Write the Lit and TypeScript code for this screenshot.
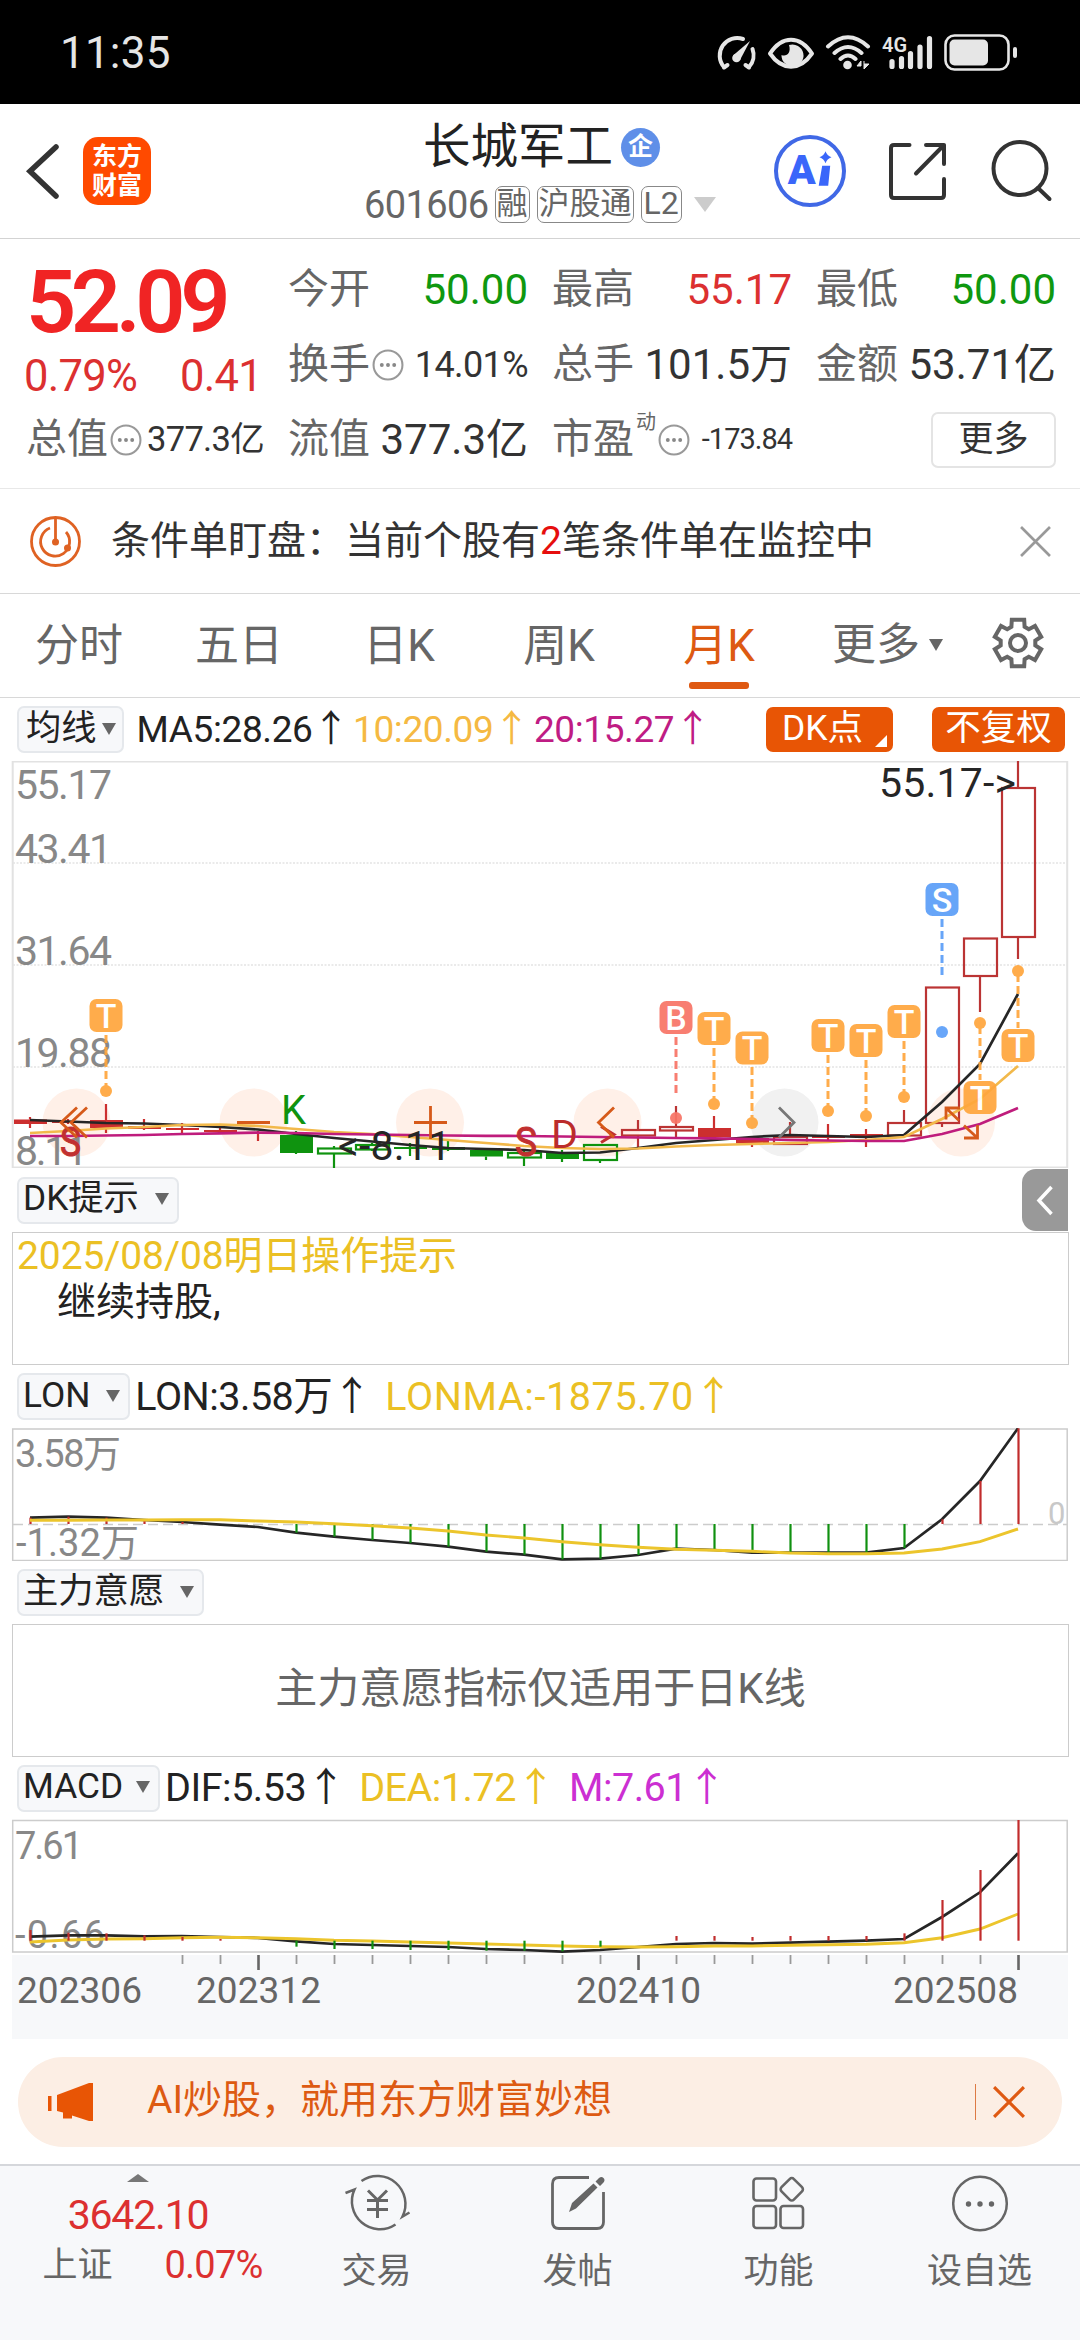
import { LitElement, html, svg, css } from "lit";
import { customElement } from "lit/decorators.js";

const STEP = 38;
const X0 = 30;
const cx = (i: number) => X0 + i * STEP;
const line = (ys: number[]) => ys.map((y, i) => `${cx(i)},${y.toFixed(1)}`).join(" ");

/* [top wick, body top, body bottom, bottom wick, kind] */
type Candle = [number, number, number, number, "rf" | "rh" | "gf" | "gh"];
const CANDLES: Candle[] = [
  [1117, 1119.5, 1124, 1128, "rf"],
  [1119, 1121, 1123, 1124, "rf"],
  [1104, 1120, 1128, 1133, "rf"],
  [1119, 1126, 1129, 1130, "rf"],
  [1123, 1128, 1130, 1133, "rf"],
  [1126, 1130, 1132, 1134, "rf"],
  [1131, 1132, 1134, 1141, "rf"],
  [1131, 1135, 1153, 1154, "gf"],
  [1146, 1148.5, 1153.5, 1169, "gh"],
  [1143, 1145, 1149.5, 1151, "gh"],
  [1143, 1147, 1149, 1156, "gf"],
  [1141, 1147, 1150, 1151, "gf"],
  [1149, 1150, 1156.5, 1160, "gf"],
  [1151, 1153, 1157.5, 1166, "gh"],
  [1150, 1153, 1159, 1162, "gf"],
  [1144, 1145, 1160, 1163, "gh"],
  [1120, 1130, 1135.5, 1147, "rh"],
  [1106, 1127, 1130.5, 1137, "rh"],
  [1116, 1128, 1137, 1138, "rf"],
  [1137, 1138, 1143.5, 1147, "rf"],
  [1122, 1137, 1144, 1144, "rh"],
  [1124, 1136, 1138, 1142, "rf"],
  [1129, 1134, 1136.5, 1147, "rf"],
  [1110, 1123, 1135.5, 1137, "rh"],
  [987, 987.5, 1123, 1127, "rh"],
  [938, 938.5, 976, 1012, "rh"],
  [761, 788, 937, 959, "rh"],
];
const MA5 = [1120, 1121.5, 1123, 1123.5, 1125, 1127, 1129.5, 1134, 1138, 1141.5, 1145, 1148, 1149, 1150, 1153, 1152.5, 1148, 1143, 1140, 1137, 1135, 1136, 1137, 1135, 1102, 1064, 994];
const MA10 = [1133, 1131, 1128.5, 1127, 1125, 1124.5, 1126, 1129, 1132, 1134, 1137, 1140, 1143, 1146, 1148, 1149, 1148.5, 1146.5, 1145, 1144, 1143, 1142, 1140, 1137, 1119, 1099, 1066];
const MA20 = [1136, 1136, 1135.5, 1135, 1134, 1133.3, 1132.6, 1133, 1134, 1134.5, 1135, 1135.5, 1135.8, 1136, 1136.5, 1137, 1137.5, 1138, 1138.3, 1139, 1140, 1140.5, 1141, 1141, 1134, 1124, 1108];

const LON = [1073, 1070, 1073, 1080, 1086, 1094, 1101, 1118, 1130, 1140, 1149, 1160, 1175, 1184, 1198, 1196, 1185, 1166, 1170, 1178, 1178, 1178, 1178, 1164, 1078, 963, 805].map((v) => 1160 + v / 3);
const LONMA = [1081, 1081, 1080, 1080, 1079, 1079, 1083, 1086, 1091, 1097, 1104, 1113, 1125, 1134, 1145, 1154, 1162, 1168, 1171, 1174, 1179, 1181, 1181, 1179, 1167, 1145, 1107].map((v) => 1160 + v / 3);
const DIF = [1130, 1126, 1126, 1129, 1128, 1131, 1134, 1144, 1152, 1155, 1158, 1161, 1167, 1170, 1175, 1170, 1161, 1152, 1149, 1151, 1148, 1145, 1142, 1137, 1071, 997, 880].map((v) => 1560 + v / 3);
const DEA = [1146, 1140, 1137, 1136, 1133, 1132, 1133, 1136, 1141, 1143, 1146, 1149, 1152, 1155, 1158, 1160, 1161, 1160, 1158, 1158, 1156, 1154, 1153, 1148, 1133, 1107, 1062].map((v) => 1560 + v / 3);
const MBAR = [1110, 1118, 1120, 1126, 1131, 1137, 1142, 1160, 1167, 1167, 1170, 1170, 1172, 1172, 1174, 1160, 1142, 1128, 1128, 1131, 1128, 1128, 1128, 1120, 1020, 930, 780].map((v) => 1560 + v / 3);

/* index, letter, top of the badge, dot centre, dash start, dash end */
const MARKS: [number, string, number, number, number, number][] = [
  [2, "T", 999, 1091, 1035, 1088],
  [17, "B", 1001, 1118, 1037, 1093],
  [18, "T", 1012, 1104, 1048, 1101],
  [19, "T", 1031.5, 1123, 1067, 1120],
  [21, "T", 1019, 1111, 1055, 1108],
  [22, "T", 1024, 1116, 1060, 1113],
  [23, "T", 1005, 1097, 1041, 1094],
  [24, "S", 883, 1032, 919, 976],
  [25, "T", 1081, 1023, 1026, 1080],
  [26, "T", 1029, 971, 974, 1028],
];
const MARK_COLOR: Record<string, string> = { T: "#ffa63c", B: "#f87466", S: "#5b9ef8" };

@customElement("app-root")
export class AppRoot extends LitElement {
  static styles = css`
    :host {
      display: block;
      width: 1080px;
      height: 2340px;
      overflow: hidden;
      background: #fff;
      color: #222;
      font-family: Roboto, "Noto Sans CJK SC", sans-serif;
      font-size: 36px;
      line-height: 1;
    }
    * { box-sizing: border-box; }
    svg { display: block; flex: none; }
    svg text { font-family: Roboto, "Noto Sans CJK SC", sans-serif; }

    .status { height: 104px; background: #000; color: #e6e6e6; display: flex; align-items: center; justify-content: space-between; padding: 2px 62px 0 60px; }
    .clock { font-size: 44px; letter-spacing: 0.2px; }
    .g4 { font-size: 20px; font-weight: 600; fill: #e6e6e6; }

    .header { height: 135px; border-bottom: 1.5px solid #d3d3d3; display: flex; align-items: center; padding: 0 28px 0 24px; }
    .logo { width: 68px; height: 68px; border-radius: 15px; background: #ff4a00; color: #fff; font-size: 25px; line-height: 29px; font-weight: 700; margin-left: 23px; padding: 5px 0 0; text-align: center; flex: none; }
    .titles { width: 351px; margin-left: 213px; height: 134px; padding-top: 18px; flex: none; }
    .name { display: flex; align-items: center; gap: 8px; padding-left: 59px; height: 52px; font-size: 47.5px; }
    .seal { width: 39px; height: 39px; border-radius: 50%; background: #5f8fe8; color: #fff; font-size: 25px; font-weight: 700; line-height: 37px; text-align: center; margin-top: -2px; }
    .code { display: flex; align-items: center; gap: 7px; height: 37px; margin-top: 12px; color: #666; font-size: 38px; white-space: nowrap; }
    .code > * { flex: none; }
    .num { letter-spacing: -0.6px; margin-right: -1px; }
    .tag { border: 1.5px solid #888; border-radius: 7px; height: 37px; line-height: 33px; font-size: 31px; padding: 0 1px; }
    .tag2 { font-size: 32px; padding: 0 2px; }
    .tri { width: 0; height: 0; border: 7.5px solid transparent; border-top: 12px solid #666; border-bottom: 0; }
    .tri-lg { border: 11px solid transparent; border-top: 15px solid #ccc; border-bottom: 0; margin-left: 5px; }
    .acts { display: flex; align-items: center; margin-left: 58px; }
    .share { margin-left: 41px; }
    .search { margin-left: 43px; }
    .ai { font-size: 41px; font-weight: 900; fill: #3a66fa; }

    .quote { height: 250px; border-bottom: 1.5px solid #e8e8e8; display: grid; grid-template-columns: 238px 240px 240px 240px; column-gap: 24px; padding: 13px 0 0 26px; color: #333; font-size: 41px; }
    .qcol { display: flex; flex-direction: column; }
    .cell { height: 75px; display: flex; align-items: center; justify-content: space-between; white-space: nowrap; }
    .lab { display: flex; align-items: center; gap: 2px; color: #666; }
    .price { font-size: 88px; font-weight: 600; letter-spacing: -5.4px; color: #f02424; height: 100px; line-height: 100px; }
    .chg { height: 50px; display: flex; align-items: center; justify-content: space-between; color: #dc3030; font-size: 43.5px; letter-spacing: -0.7px; padding: 0 2px 0 0; margin-left: -2px; }
    .val { font-size: 42px; }
    .up { color: #dc3030; }
    .down { color: #0f980f; }
    .mid { font-size: 36px; letter-spacing: -0.6px; }
    .mid2 { font-size: 34.5px; letter-spacing: -0.7px; }
    .sml { font-size: 29px; letter-spacing: -1px; }
    .more { width: 125px; height: 56px; border: 2px solid #e4e4e4; border-radius: 7px; font-size: 35px; line-height: 51px; text-align: center; margin-left: 115px; }
    .dyn { font-size: 20px; align-self: flex-start; margin: -7px 0 0 0; }

    .notice { height: 105px; border-bottom: 1.5px solid #d8d8d8; display: flex; align-items: center; padding: 0 29px 0 29px; color: #333; }
    .ntext { flex: 1; margin-left: 29px; font-size: 39px; white-space: nowrap; }
    .hot { color: #e60e0e; }

    .tabs { height: 104px; border-bottom: 1.5px solid #d8d8d8; display: flex; color: #666; font-size: 44px; }
    .tab { width: 160px; flex: none; height: 103px; display: flex; flex-direction: column; align-items: center; padding-top: 30px; padding-right: 2px; }
    .on { color: #dd5a12; }
    .on::after { content: ""; width: 60px; height: 7px; border-radius: 3px; background: #df5912; margin-top: 14px; }
    .tmore { width: 192px; flex: none; display: flex; align-items: center; gap: 9px; padding-left: 32px; padding-bottom: 2px; }
    .tset { display: flex; align-items: center; padding-bottom: 6px; }

    .bar { height: 63px; display: flex; align-items: center; padding-left: 17px; white-space: nowrap; }
    .bar-dk { height: 64px; }
    .bar-macd { height: 62px; }
    .chip { height: 47px; border: 2px solid #e5e8ec; border-radius: 7px; background: #f7f8fa; display: flex; align-items: center; gap: 16px; padding: 0 8px 2px 4px; font-size: 35.3px; }
    .chip-ma { gap: 5px; padding-left: 7px; padding-right: 6px; }
    .chip-macd { gap: 13px; }
    .leg { display: flex; color: #222; margin-left: 5px; font-size: 39.5px; letter-spacing: -0.5px; }
    .leg span { margin-right: 14px; }
    .wide { letter-spacing: 0.6px; }
    .leg-ma { font-size: 37px; margin-left: 13px; letter-spacing: -0.4px; }
    .leg-ma span { margin-right: 4px; }
    .c10 { color: #f5b942; }
    .c20 { color: #bf1c84; }
    .cy { color: #ebc024; }
    .cm { color: #cc2fd2; }
    .pill { height: 45px; border-radius: 7px; background: #e85505; color: #fff; font-size: 35.5px; line-height: 43px; text-align: center; }
    .pills { margin-left: auto; margin-right: 15px; display: flex; gap: 39px; }
    .p1 { width: 127px; padding-right: 14px; position: relative; }
    .p1::after { content: ""; position: absolute; right: 6px; bottom: 5px; border-left: 12px solid transparent; border-bottom: 12px solid #fff; }
    .p2 { width: 133px; }

    .axis { fill: #888; }
    .drawer { margin-left: auto; margin-right: 12px; width: 46px; height: 62px; background: #999; border-radius: 14px 0 0 14px; }
    .panel { height: 133px; margin: 0 11px 0 12px; border: 1.5px solid #ccc; font-size: 39px; line-height: 46px; padding: 0 0 0 4px; white-space: pre; }
    .l1 { color: #ebc024; letter-spacing: -0.1px; }
    .l2 { padding-left: 40px; }
    .panel-c { display: flex; align-items: center; justify-content: center; color: #666; font-size: 42px; padding: 0 0 4px; }

    .banner { margin: 18px 18px 17px; height: 90px; border-radius: 45px; background: #fceee4; color: #dd5a12; display: flex; align-items: center; padding: 0 37px 0 28px; font-size: 39px; }
    .btext { margin-left: 53px; flex: 1; padding-bottom: 3px; }
    .sep { width: 1.5px; height: 36px; background: #dd7a45; margin-right: 17px; }

    .nav { height: 176px; border-top: 2px solid #d5d7db; background: #f7f8fa; display: flex; color: #666; }
    .index { width: 276px; display: flex; flex-direction: column; align-items: center; flex: none; }
    .uptri { border: 11px solid transparent; border-bottom: 8px solid #777; border-top: 0; margin-top: 8px; }
    .ival { font-size: 41px; letter-spacing: -1.2px; color: #dc3030; margin-top: 12px; height: 42px; line-height: 42px; }
    .irow { display: flex; align-items: center; gap: 52px; font-size: 35px; margin-top: 8px; height: 42px; padding-left: 29px; }
    .ipct { font-size: 38px; letter-spacing: -0.8px; color: #dc3030; }
    .item { width: 201.5px; display: flex; flex-direction: column; align-items: center; padding-top: 5px; font-size: 35px; gap: 17px; }
  `;

  private dots() {
    return html`<svg width="32" height="32" viewBox="-0.500 -0.500 31 31"><circle cx="15" cy="15" r="14" fill="none" stroke="#999" stroke-width="2"/><g fill="#888"><circle cx="9" cy="15" r="1.9"/><circle cx="15" cy="15" r="1.9"/><circle cx="21" cy="15" r="1.9"/></g></svg>`;
  }

  private cross(size: number, color: string, w: number) {
    return html`<svg width=${size} height=${size} viewBox="0 0 30 30" fill="none" stroke=${color} stroke-width=${w}><path d="M1 1 29 29M29 1 1 29"/></svg>`;
  }

  private status() {
    return html`<div class="status">
      <span class="clock">11:35</span>
      <svg width="302" height="40" viewBox="714 32 302 40" fill="none" stroke="#e6e6e6">
        <path d="M722 66A17.500 17.500 0 0 1 741 38M750.500 48A17.500 17.500 0 0 1 747 66" stroke-width="4" stroke-linecap="round"/>
        <path d="M748 40 738 59 731 54.500Z" fill="#e6e6e6" stroke="none"/>
        <path d="M722 66.500l3.500-2.500M747 66.500l-3.500-2.500" stroke-width="4" stroke-linecap="round"/>
        <circle cx="734.500" cy="57" r="4.300" fill="#e6e6e6" stroke="none"/>
        <path d="M768 52.500C780 34 798 34 810 52.500C798 70 780 70 768 52.500Z" stroke-width="4" stroke-linejoin="round"/>
        <path d="M787 44a11 11 0 1 1-7.500 10c5 2 10-2 7.500-10Z" fill="#e6e6e6" stroke="none"/>
        <g stroke-width="4" stroke-linecap="round">
          <path d="M826 45.500Q846 27 866 45.500M832.500 52Q846 40 859.500 52M838.500 58Q846 51 853.500 58"/>
        </g>
        <circle cx="845.500" cy="64" r="4.300" fill="#e6e6e6" stroke="none"/>
        <path d="M855 65h4v-5l-4 5ZM862 63h5l-5 5v-8" fill="#e6e6e6" stroke-width="1"/>
        <text class="g4" x="880" y="51" stroke="none" textLength="25" lengthAdjust="spacingAndGlyphs">4G</text>
        <g stroke-width="5.200" stroke-linecap="round"><path d="M890 60.500v5M899.500 57.500v8M908.500 52.500v13M918 46v19.500M927.500 37.500v28"/></g>
        <rect x="943.500" y="34.500" width="63" height="34" rx="9" stroke-width="2.600"/>
        <rect x="947.500" y="38.500" width="38.500" height="26" rx="5" fill="#e6e6e6" stroke="none"/>
        <rect x="1011" y="46" width="4" height="11" rx="2" fill="#e6e6e6" stroke="none"/>
      </svg>
    </div>`;
  }

  private header() {
    return html`<div class="header">
      <svg width="36" height="60" viewBox="24 141 36 60" fill="none" stroke="#333" stroke-width="5.500" stroke-linecap="round"><path d="M56 147 30 171.300 56 196"/></svg>
      <div class="logo">东方<br>财富</div>
      <div class="titles">
        <div class="name"><span>长城军工</span><span class="seal">企</span></div>
        <div class="code"><span class="num">601606</span><span class="tag">融</span><span class="tag">沪股通</span><span class="tag tag2">L2</span><span class="tri tri-lg"></span></div>
      </div>
      <div class="acts">
        <svg width="74" height="74" viewBox="771.300 134.300 74 74"><circle cx="808.300" cy="171.300" r="34" fill="none" stroke="#4068e6" stroke-width="4"/>
          <text class="ai" x="786" y="184" textLength="29">A</text>
          <path d="M820.500 166h8l-2 20h-9.500zM823.800 151.500q1.500 4.500 6 6q-4.500 1.500-6 6q-1.500-4.500-6-6q4.500-1.500 6-6z" fill="#3a66fa"/></svg>
        <svg class="share" width="60" height="60" viewBox="887 141 60 60" fill="none" stroke="#333" stroke-width="4" stroke-linecap="round" stroke-linejoin="round"><path d="M908.500 145H893q-3 0-3 3v47q0 3 3 3h47q3 0 3-3V179M925 145h18v19M943 145 915 173.500"/></svg>
        <svg class="search" width="62" height="64" viewBox="990 139 62 64" fill="none" stroke="#333" stroke-width="4" stroke-linecap="round"><circle cx="1019" cy="168.500" r="26.500"/><path d="M1037 188 1048.500 199"/></svg>
      </div>
    </div>`;
  }

  private quote() {
    return html`<div class="quote">
      <div class="qcol">
        <div class="price">52.09</div>
        <div class="chg"><span>0.79%</span><span>0.41</span></div>
        <div class="cell"><span class="lab">总值${this.dots()}</span><span class="val mid2">377.3亿</span></div>
      </div>
      <div class="qcol">
        <div class="cell"><span class="lab">今开</span><span class="val down">50.00</span></div>
        <div class="cell"><span class="lab">换手${this.dots()}</span><span class="val mid">14.01%</span></div>
        <div class="cell"><span class="lab">流值</span><span class="val">377.3亿</span></div>
      </div>
      <div class="qcol">
        <div class="cell"><span class="lab">最高</span><span class="val up">55.17</span></div>
        <div class="cell"><span class="lab">总手</span><span class="val">101.5万</span></div>
        <div class="cell"><span class="lab">市盈<span class="dyn">动</span>${this.dots()}</span><span class="val sml">-173.84</span></div>
      </div>
      <div class="qcol">
        <div class="cell"><span class="lab">最低</span><span class="val down">50.00</span></div>
        <div class="cell"><span class="lab">金额</span><span class="val">53.71亿</span></div>
        <div class="cell"><span class="more">更多</span></div>
      </div>
    </div>`;
  }

  private gear() {
    const pts: string[] = [];
    for (let k = 0; k < 6; k++) {
      const a = k * 60;
      for (const [da, r] of [[-22, 17.5], [-15, 24], [15, 24], [22, 17.5]] as const) {
        const t = ((a + da - 90) * Math.PI) / 180;
        pts.push(`${(26 + r * Math.cos(t)).toFixed(1)},${(26 + r * Math.sin(t)).toFixed(1)}`);
      }
    }
    return html`<svg width="52" height="52" viewBox="0 0 52 52" fill="none" stroke="#666" stroke-width="4"><polygon points=${pts.join(" ")}/><circle cx="26" cy="26" r="8"/></svg>`;
  }

  private mainChart() {
    const red = "#bb3434";
    return html`<svg width="1080" height="407" viewBox="0 761 1080 407" fill="none">
      <rect x="12.700" y="761.500" width="1054.500" height="406" stroke="#e2e2e2" stroke-width="2"/>
      <path d="M13 863H1067M13 965H1067M13 1067H1067" stroke="#e4e4e4" stroke-width="1.500" stroke-dasharray="2 1.500"/>
      ${[76.5, 253.5, 430, 607.5, 961].map((x) => svg`<circle cx=${x} cy="1122.500" r="34" fill="#fff0e8"/>`)}
      <circle cx="784.500" cy="1122.500" r="34" fill="#f1f1f1"/>
      <g class="axis" font-size="41">
        <text x="15" y="799" textLength="97">55.17</text><text x="15" y="863" textLength="97">43.41</text>
        <text x="15" y="965" textLength="97">31.64</text><text x="15" y="1067" textLength="97">19.88</text>
        <text x="15" y="1165" textLength="73">8.11</text>
      </g>
      ${CANDLES.map(([h, t, b, l, k], i) => {
        const c = k[0] === "g" ? "#0f930f" : k === "rf" ? "#cc2f2f" : red;
        const x = cx(i);
        return svg`<path d="M${x} ${h}V${t}M${x} ${b}V${l}" stroke=${c} stroke-width="2.200"/>
          <rect x=${x - 16} y=${t} width="33" height=${b - t} fill=${k[1] === "f" ? c : "none"} stroke=${c} stroke-width=${k[1] === "f" ? 0 : 2.2}/>`;
      })}
      <polyline points=${line(MA5)} stroke="#262626" stroke-width="2.700"/>
      <polyline points=${line(MA10)} stroke="#f2b94b" stroke-width="2.700"/>
      <polyline points=${line(MA20)} stroke="#bf1c7c" stroke-width="2.700"/>
      <g font-size="41">
        <text x="60" y="1156" fill="#c13030" stroke="#c13030" textLength="21" lengthAdjust="spacingAndGlyphs">S</text>
        <text x="515" y="1156" fill="#c13030" stroke="#c13030" textLength="22" lengthAdjust="spacingAndGlyphs">S</text>
        <text x="281" y="1124" fill="#0f930f" textLength="25" lengthAdjust="spacingAndGlyphs">K</text>
        <text x="551" y="1148" fill="#bb2c2c" font-size="38" textLength="27" lengthAdjust="spacingAndGlyphs">D</text>
        <text x="338" y="1160" fill="#262626" textLength="113">&lt;-8.11</text>
        <text x="879" y="797" fill="#262626" textLength="137">55.17-&gt;</text>
      </g>
      <path d="M601 1126.500 614 1134.500 601 1142.500" stroke="#c13030" stroke-width="3"/>
      <g stroke="#d65a1a" stroke-width="2.800">
        <path d="M77 1107.500 61 1122.500 77 1137.500M87 1107.500 71 1122.500 87 1137.500M237 1122.500h33M414 1122.500h33M430.500 1106v33M614 1107.500 598.500 1122.500 614 1137.500"/>
        <path d="M946 1119.500V1108h14M946 1108 959 1120.500M964 1138h13.500V1125M977.500 1138 964 1125.500"/>
      </g>
      <path d="M779 1107.500 794 1122.500 779 1137.500" stroke="#777" stroke-width="2.800"/>
      ${MARKS.map(([i, ch, top, dot, d1, d2]) => {
        const x = cx(i);
        const c = MARK_COLOR[ch];
        return svg`<g opacity="0.92"><path d="M${x} ${d1}V${d2}" stroke=${c} stroke-width="3" stroke-dasharray="8 4"/>
          <circle cx=${x} cy=${dot} r="6" fill=${c}/>
          <rect x=${x - 16.5} y=${top} width="33" height="33" rx="7" fill=${c}/>
          <text x=${x} y=${top + 28.5} font-size="34" font-weight="500" text-anchor="middle" fill="#fff">${ch}</text></g>`;
      })}
    </svg>`;
  }

  private lonChart() {
    return html`<svg width="1080" height="133" viewBox="0 1428 1080 133" fill="none">
      <rect x="12.700" y="1429" width="1054.500" height="131.500" stroke="#ccc" stroke-width="1.500"/>
      <path d="M13 1524.500H1067" stroke="#ccc" stroke-width="1.500" stroke-dasharray="10 5"/>
      <g class="axis" font-size="38"><text x="15" y="1467" textLength="106">3.58万</text><text x="16" y="1556" textLength="123">-1.32万</text></g>
      <text x="1048" y="1524" font-size="31" fill="#c8c8c8">0</text>
      <polyline points=${line(LON)} stroke="#262626" stroke-width="2.700"/>
      ${LON.map((y, i) => (i === 5 || i === 6 ? "" : svg`<path d="M${cx(i) + 0.5} 1524V${y}" stroke=${i > 6 && i < 24 ? "#109010" : "#c12c2c"} stroke-width="2.200"/>`))}
      <polyline points=${line(LONMA)} stroke="#ecc52c" stroke-width="2.900"/>
    </svg>`;
  }

  private macdChart() {
    return html`<svg width="1080" height="220" viewBox="0 1819 1080 220" fill="none">
      <rect x="12.700" y="1820.500" width="1054.500" height="131.500" stroke="#ccc" stroke-width="1.500"/>
      <g class="axis" font-size="38"><text x="15" y="1859" textLength="68">7.61</text><text x="15" y="1948" textLength="90">-0.66</text></g>
      <polyline points=${line(DIF)} stroke="#262626" stroke-width="2.700"/>
      <polyline points=${line(DEA)} stroke="#ecc52c" stroke-width="2.900"/>
      ${MBAR.map((y, i) => svg`<path d="M${cx(i) + 0.5} 1940.700V${y}" stroke=${i > 6 && i < 16 ? "#109010" : "#c12c2c"} stroke-width="2.200"/>`)}
      <rect x="12" y="1955" width="1056" height="84" fill="#f7f8fa"/>
      ${CANDLES.map((_, i) => {
        if (i < 4) return "";
        const big = i % 10 === 6;
        return svg`<path d="M${cx(i) + 0.5} 1955v${big ? 15 : 9}" stroke=${big ? "#666" : "#999"} stroke-width=${big ? 2.6 : 1.8}/>`;
      })}
      <g fill="#666" font-size="37"><text x="17" y="2003" textLength="125">202306</text><text x="196" y="2003" textLength="125">202312</text><text x="576" y="2003" textLength="125">202410</text><text x="893" y="2003" textLength="125">202508</text></g>
    </svg>`;
  }

  private nav() {
    return html`<div class="nav">
      <div class="index">
        <span class="uptri"></span>
        <span class="ival">3642.10</span>
        <div class="irow"><span>上证</span><span class="ipct">0.07%</span></div>
      </div>
      <div class="item">
        <svg width="68" height="66" viewBox="341 2172 68 66" fill="none" stroke="#666" stroke-width="2.500"><path d="M359.500 2182A28 28 0 0 1 400.500 2217.500L407.500 2213.500M393.500 2225.500A28 28 0 0 1 352.500 2190.500L343.500 2194"/><path d="M366 2191.500 375.500 2201 385 2191.500M375.500 2201v18M365 2201.500h21M365 2210.500h21" stroke-width="3"/></svg>
        <span>交易</span></div>
      <div class="item">
        <svg width="58" height="66" viewBox="548 2172 58 66" fill="none" stroke="#666" stroke-width="2.800"><path d="M588 2178.500H558q-6.500 0-6.500 6.500v38q0 6.500 6.500 6.500h38q6.500 0 6.500-6.500v-30"/><path d="M568 2213l3-9 21.500-19.500 4 4-21.500 21zM594.500 2182.500l3.500-3.500q2.500-2 4.500 0t0 4.500l-3.500 3.500z" fill="#666" stroke="none"/></svg>
        <span>发帖</span></div>
      <div class="item">
        <svg width="58" height="66" viewBox="750 2172 58 66" fill="none" stroke="#666" stroke-width="2.600"><rect x="753.500" y="2179.500" width="22.500" height="22" rx="3"/><rect x="753.500" y="2207" width="22.500" height="22" rx="3"/><rect x="780.500" y="2207" width="22.500" height="22" rx="3"/><rect x="783" y="2181.500" width="17.500" height="17.500" rx="3" transform="rotate(45 791.700 2190.300)"/></svg>
        <span>功能</span></div>
      <div class="item">
        <svg width="58" height="66" viewBox="950 2171 58 66" fill="none" stroke="#666" stroke-width="2.500"><circle cx="979" cy="2203.500" r="26.800"/><g fill="#666" stroke="none"><circle cx="967.500" cy="2204" r="2.700"/><circle cx="979" cy="2204" r="2.700"/><circle cx="990.500" cy="2204" r="2.700"/></g></svg>
        <span>设自选</span></div>
    </div>`;
  }

  render() {
    return html`
      ${this.status()} ${this.header()} ${this.quote()}
      <div class="notice">
        <svg width="53" height="53" viewBox="29 514.500 53 53" fill="none" stroke="#df6223" stroke-width="2.800"><circle cx="55.500" cy="541" r="24"/><path d="M50 527.500A14.500 14.500 0 1 0 66 531.500M55.500 517v24"/><circle cx="55.500" cy="541.500" r="3.500" fill="#df6223" stroke="none"/><circle cx="67.500" cy="547.500" r="3.500" fill="#df6223" stroke="none"/></svg>
        <div class="ntext">条件单盯盘：当前个股有<span class="hot">2</span>笔条件单在监控中</div>
        ${this.cross(31, "#999", 2.6)}
      </div>
      <div class="tabs">
        <div class="tab">分时</div><div class="tab">五日</div><div class="tab">日K</div><div class="tab">周K</div><div class="tab on">月K</div>
        <div class="tmore">更多<span class="tri"></span></div>
        <div class="tset">${this.gear()}</div>
      </div>
      <div class="bar">
        <div class="chip chip-ma">均线<span class="tri"></span></div>
        <div class="leg leg-ma"><span>MA5:28.26↑</span><span class="c10">10:20.09↑</span><span class="c20">20:15.27↑</span></div>
        <div class="pills"><div class="pill p1">DK点</div><div class="pill p2">不复权</div></div>
      </div>
      ${this.mainChart()}
      <div class="bar bar-dk">
        <div class="chip">DK提示<span class="tri"></span></div>
        <div class="drawer"><svg width="46" height="62" viewBox="1023 1169 46 62" fill="none" stroke="#fff" stroke-width="3.500"><path d="M1052.500 1187 1040 1200.500 1052.500 1214"/></svg></div>
      </div>
      <div class="panel"><div class="l1">2025/08/08明日操作提示</div><div class="l2">继续持股,</div></div>
      <div class="bar">
        <div class="chip">LON<span class="tri"></span></div>
        <div class="leg"><span>LON:3.58万↑</span><span class="cy wide">LONMA:-1875.70↑</span></div>
      </div>
      ${this.lonChart()}
      <div class="bar"><div class="chip">主力意愿<span class="tri"></span></div></div>
      <div class="panel panel-c">主力意愿指标仅适用于日K线</div>
      <div class="bar bar-macd">
        <div class="chip chip-macd">MACD<span class="tri"></span></div>
        <div class="leg"><span>DIF:5.53↑</span><span class="cy">DEA:1.72↑</span><span class="cm">M:7.61↑</span></div>
      </div>
      ${this.macdChart()}
      <div class="banner">
        <svg width="48" height="42" viewBox="46 2080 48 42" fill="#e85505"><path d="M48 2095h3.500v15H48zM57 2094l32-12h4v38h-4l-17-5.500v3h-9v-6l-6-1.500z"/></svg>
        <span class="btext">AI炒股，就用东方财富妙想</span>
        <span class="sep"></span>${this.cross(32, "#df5912", 3)}
      </div>
      ${this.nav()}
    `;
  }
}
